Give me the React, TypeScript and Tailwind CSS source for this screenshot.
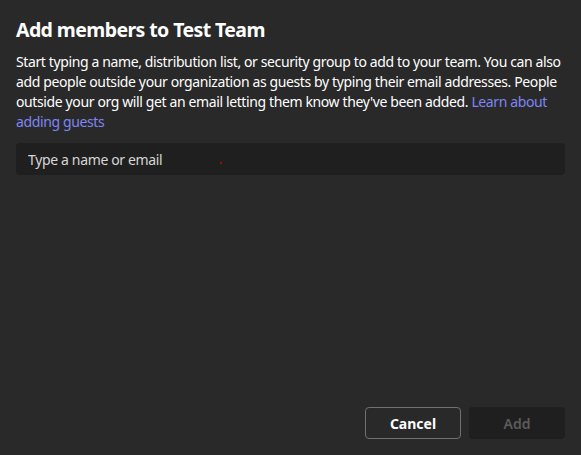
import React from 'react'

export default function App() {
  return (
    <div className="flex h-[455px] w-[581px] flex-col bg-[#292929] px-4 pt-[17px] pb-4 text-white font-['Segoe_UI','Noto_Sans',sans-serif]">
      <h1 className="text-[19.5px] font-bold leading-[26px] text-white tracking-[-0.6px]">Add members to Test Team</h1>
      <p className="mt-[9px] text-[14px] leading-[20px] text-white tracking-[-0.38px]">
        Start typing a name, distribution list, or security group to add to your team. You can also
        <br />
        add people outside your organization as guests by typing their email addresses. People
        <br />
        outside your org will get an email letting them know they've been added.{' '}
        <a href="#" className="text-[#7f85f5]">Learn about</a>
        <br />
        <a href="#" className="text-[#7f85f5]">adding guests</a>
      </p>
      <div className="relative mt-[11px]">
        <input
          type="text"
          placeholder="Type a name or email"
          className="h-8 w-full rounded-[4px] bg-[#1f1f1f] px-3 text-[14px] text-white outline-none placeholder:text-[#d6d6d6] tracking-[-0.35px]"
        />
        <span className="absolute left-[204px] top-[19px] h-[2px] w-[2px] rounded-full bg-[#d40000]" />
      </div>
      <div className="mt-auto flex justify-end gap-2">
        <button className="h-8 w-24 rounded-[4px] border border-[#707070] text-[14px] font-bold text-white">
          Cancel
        </button>
        <button disabled className="h-8 w-24 rounded-[4px] bg-[#1f1f1f] text-[14px] font-semibold text-[#5c5c5c]">
          Add
        </button>
      </div>
    </div>
  )
}
